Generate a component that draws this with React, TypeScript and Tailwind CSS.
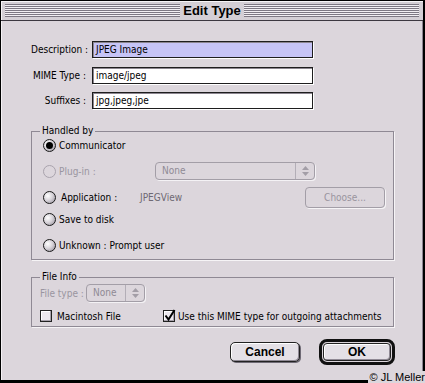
import React from 'react';

const font = "font-['DejaVu_Sans_Condensed','Liberation_Sans',Arial,sans-serif]";

function Radio({ checked = false, disabled = false }: { checked?: boolean; disabled?: boolean }) {
  if (disabled) {
    return <span className="w-[13px] h-[13px] rounded-full border border-[#a9a3ad] shrink-0" />;
  }
  return (
    <span className="w-[13px] h-[13px] rounded-full border border-[#1a1a1a] shrink-0 flex items-center justify-center bg-[radial-gradient(circle_at_35%_35%,#ffffff_0%,#d8d4da_45%,#8e8894_100%)]">
      {checked && <span className="w-[7px] h-[7px] rounded-full bg-black" />}
    </span>
  );
}

function Checkbox({ checked = false }: { checked?: boolean }) {
  return (
    <span className="relative w-[12px] h-[12px] border border-[#222] bg-[#ece8ee] shadow-[inset_-1px_-1px_0_#a8a2ac,inset_1px_1px_0_#ffffff] shrink-0">
      {checked && (
        <svg className="absolute left-0 -top-[2px]" width="12" height="13" viewBox="0 0 12 13">
          <path d="M1.5 6.5 L4.5 10.5 L10.5 1" stroke="#000" strokeWidth="2" fill="none" />
        </svg>
      )}
    </span>
  );
}

function Arrows() {
  return (
    <svg width="9" height="12" viewBox="0 0 9 12">
      <path d="M4.5 1 L8 5 L1 5 Z" fill="#a39ea7" />
      <path d="M4.5 11 L8 7 L1 7 Z" fill="#a39ea7" />
    </svg>
  );
}

function Popup({ width, label }: { width: string; label: string }) {
  return (
    <div className={`${width} h-[18px] flex rounded-[4px] border border-[#a39ea7] shadow-[1px_1px_0_#f4f2f5] text-[#8f8a94] shrink-0`}>
      <span className="flex-1 pl-[6px] leading-[16px]">{label}</span>
      <span className="w-[19px] border-l border-[#b3aeb7] flex items-center justify-center">
        <Arrows />
      </span>
    </div>
  );
}

function Field({ label, value, selected = false, className = '' }: { label: string; value: string; selected?: boolean; className?: string }) {
  return (
    <div className={`flex items-center h-[17px] ${className}`}>
      <span className="w-[61px] text-right pr-[6px] text-black">{label}</span>
      <div
        className={`w-[221px] h-[17px] border border-[#1e1e1e] shadow-[inset_1px_1px_0_#8c8690,1px_1px_0_#ffffff] pl-[3px] leading-[15px] text-black ${
          selected ? 'bg-[#c6c4f6]' : 'bg-white'
        }`}
      >
        {value}
      </div>
    </div>
  );
}

export default function App() {
  return (
    <div className={`relative w-[425px] h-[383px] bg-[#dcd6dc] border-t border-l border-r-[2px] border-b-[3px] border-black flex flex-col text-[10px] whitespace-nowrap ${font}`}>
      {/* title bar */}
      <div className="h-[20px] shrink-0 flex items-center px-[4px] bg-[#d4cfd5] border-b border-[#3c3840] shadow-[inset_1px_1px_0_#f6f4f6]">
        <div className="flex-1 h-[13px] bg-[repeating-linear-gradient(to_bottom,#7d7883_0px,#7d7883_1px,#f2eff3_1px,#f2eff3_2px)]" />
        <span className="px-[3px] font-bold text-[13px] leading-[14px] text-black font-['Liberation_Sans',Arial,sans-serif]">Edit Type</span>
        <div className="flex-1 h-[13px] bg-[repeating-linear-gradient(to_bottom,#7d7883_0px,#7d7883_1px,#f2eff3_1px,#f2eff3_2px)]" />
      </div>

      {/* body */}
      <div className="flex-1 flex flex-col pl-[29px] pr-[30px] border-l border-[#f5f2f5] border-r border-r-[#8a8490]">
        <div className="mt-[20px]">
          <Field label="Description :" value="JPEG Image" selected />
          <Field label="MIME Type :" value="image/jpeg" className="mt-[9px]" />
          <Field label="Suffixes :" value="jpg,jpeg,jpe" className="mt-[8px]" />
        </div>

        <fieldset className="mt-[17px] w-[363px] border border-[#8f8994] shadow-[1px_1px_0_#f6f4f6] pl-[11px] pb-[5px]">
          <legend className="-ml-[3px] px-[2px] leading-[10px] text-black">Handled by</legend>
          <div className="flex flex-col">
            <div className="flex items-center h-[18px] gap-[3px]">
              <Radio checked />
              <span className="text-black">Communicator</span>
            </div>
            <div className="flex items-center h-[18px] mt-[8px]">
              <div className="w-[112px] flex items-center gap-[3px]">
                <Radio disabled />
                <span className="text-[#9a95a0]">Plug-in :</span>
              </div>
              <Popup width="w-[160px]" label="None" />
            </div>
            <div className="flex items-center h-[18px] mt-[8px]">
              <div className="w-[97px] flex items-center gap-[5px]">
                <Radio />
                <span className="text-black">Application :</span>
              </div>
              <span className="w-[165px] text-[#6e6973]">JPEGView</span>
              <div className="w-[80px] h-[21px] rounded-[4px] border border-[#a39ea7] shadow-[1px_1px_0_#f6f4f6] flex items-center justify-center text-[#99949e]">
                Choose...
              </div>
            </div>
            <div className="flex items-center h-[18px] mt-[4px] gap-[3px]">
              <Radio />
              <span className="text-black">Save to disk</span>
            </div>
            <div className="flex items-center h-[18px] mt-[8px] gap-[3px]">
              <Radio />
              <span className="text-black">Unknown : Prompt user</span>
            </div>
          </div>
        </fieldset>

        <fieldset className="mt-[12px] w-[363px] border border-[#8f8994] shadow-[1px_1px_0_#f6f4f6] pl-[8px]">
          <legend className="px-[2px] leading-[10px] text-black">File Info</legend>
          <div className="flex items-center h-[22px] gap-[2px]">
            <span className="w-[44px] text-[#9a95a0]">File type :</span>
            <Popup width="w-[59px]" label="None" />
          </div>
          <div className="flex items-center h-[18px] mt-[3px] mb-[1px]">
            <div className="w-[123px] flex items-center gap-[5px]">
              <Checkbox />
              <span className="text-black">Macintosh File</span>
            </div>
            <div className="flex items-center gap-[3px]">
              <Checkbox checked />
              <span className="text-black">Use this MIME type for outgoing attachments</span>
            </div>
          </div>
        </fieldset>

        <div className="mt-[12px] flex items-center justify-end mr-[-3px] gap-[19px]">
          <button className="w-[70px] h-[20px] rounded-[5px] border border-[#222] bg-[#e4e0e6] shadow-[inset_-1px_-1px_0_#8f8994,inset_1px_1px_0_#ffffff,1px_1px_0_#6f6a75] font-bold text-[12px] text-black leading-none font-['Liberation_Sans',Arial,sans-serif]">
            Cancel
          </button>
          <div className="w-[76px] h-[26px] rounded-[8px] border-[3px] border-[#111] p-[1px] flex">
            <button className="flex-1 rounded-[4px] border border-[#222] bg-[#e4e0e6] shadow-[inset_-1px_-1px_0_#8f8994,inset_1px_1px_0_#ffffff] font-bold text-[12px] text-black leading-none font-['Liberation_Sans',Arial,sans-serif]">
              OK
            </button>
          </div>
        </div>
      </div>

      <span className="absolute right-[-2px] bottom-[-3px] bg-[#dcd6dc] pl-[2px] text-[11px] leading-[12px] text-black font-['Liberation_Sans',Arial,sans-serif]">© JL Meller</span>
    </div>
  );
}
